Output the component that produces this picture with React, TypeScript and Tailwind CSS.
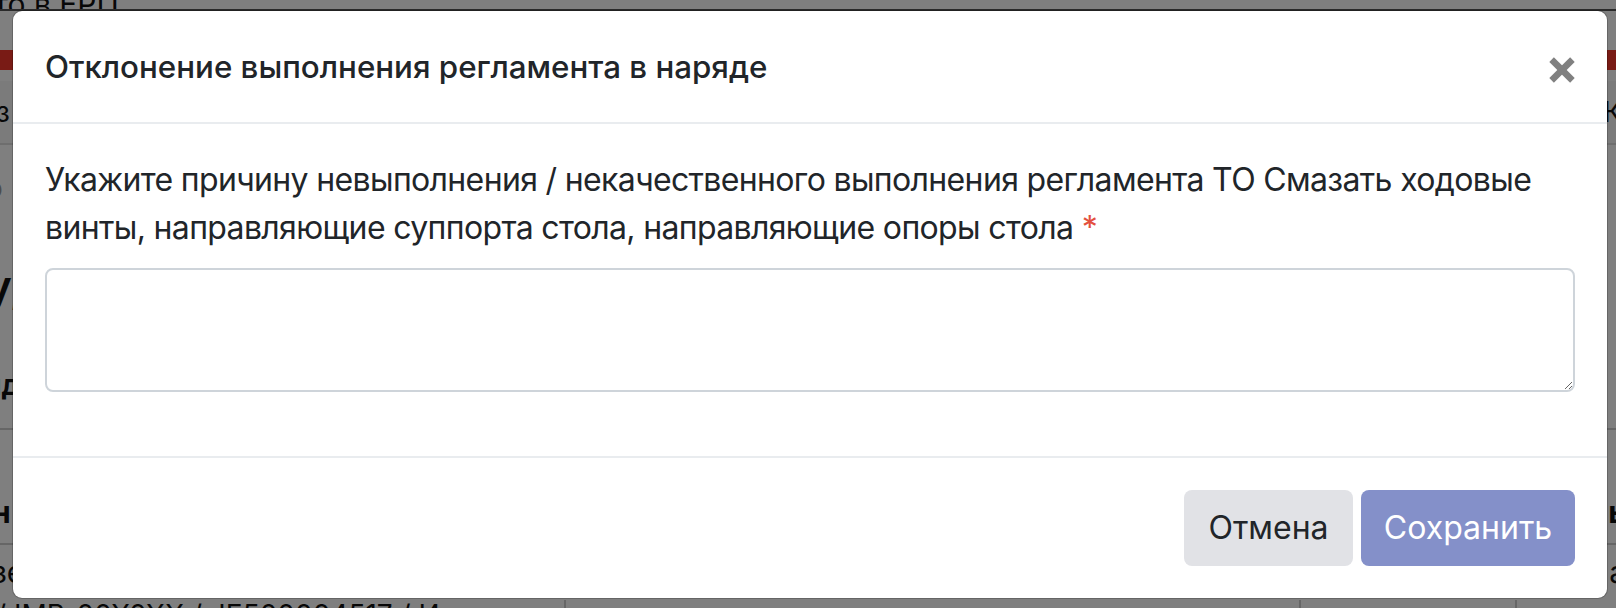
import { useState } from 'react';

function CloseIcon() {
  return (
    <svg width="26" height="26" viewBox="0 0 26 26" className="mt-[13px] shrink-0">
      <line x1="2.6" y1="2.6" x2="23.4" y2="23.4" stroke="#808080" strokeWidth="6.5" />
      <line x1="23.4" y1="2.6" x2="2.6" y2="23.4" stroke="#808080" strokeWidth="6.5" />
    </svg>
  );
}

function BackgroundPage() {
  return (
    <div className="flex flex-col w-[1616px] text-[#111]">
      <div className="h-[9px] overflow-hidden">
        <div className="-mt-[14px] -ml-[6px] text-[30px] leading-[36px]">то в ЕРП</div>
      </div>
      <div className="h-[2px] bg-[#555]" />
      <div className="h-[39px]" />
      <div className="h-[20px] bg-[#f2362b]" />
      <div className="h-[11px]" />
      <div className="h-[64px] flex items-center justify-between bg-[#f7f7f7] border-b-2 border-[#ddd] text-[28px]">
        <span className="-ml-[4px]">з</span>
        <span className="-mr-[6px]">К</span>
      </div>
      <div className="h-[283px] flex flex-col justify-around">
        <span className="-ml-[14px] text-[28px] text-[#999]">о</span>
        <span className="-ml-[14px] text-[44px] font-semibold">у,</span>
        <span className="-ml-[16px] text-[28px] font-bold">ид</span>
      </div>
      <div className="h-[2px] bg-[#ccc]" />
      <div className="h-[113px] flex items-end justify-between pb-[8px] text-[30px] font-bold">
        <span className="-ml-[8px]">н</span>
        <span className="-mr-[10px]">ь</span>
      </div>
      <div className="h-[2px] bg-[#ccc]" />
      <div className="h-[55px] flex items-center justify-between text-[30px]">
        <span className="-ml-[8px]">зе</span>
        <span className="-mr-[10px]">а</span>
      </div>
      <div className="flex text-[28px] leading-[30px]">
        <span className="w-[570px] -ml-[4px] border-r-2 border-[#ccc]">/ IMB_00X0XX / JE500004517 / И</span>
        <span className="w-[735px] border-r-2 border-[#ccc]">&nbsp;</span>
        <span className="w-[216px] border-r-2 border-[#ccc]">&nbsp;</span>
      </div>
    </div>
  );
}

export default function App() {
  const [reason, setReason] = useState('');

  return (
    <div
      className="relative w-[1616px] h-[608px] overflow-hidden bg-white"
      style={{ fontFamily: 'Inter, "Noto Sans", sans-serif' }}
    >
      <BackgroundPage />

      <div className="absolute inset-0 bg-black/50 flex justify-start pt-[10px] pl-[12px]">
        <div className="w-[1596px] h-fit bg-white border border-black/20 rounded-[10px] flex flex-col bg-clip-padding">
          <div className="flex items-start justify-between px-[32px] pt-[33px] pb-[32px] border-b-2 border-[#e9ecef]">
            <h5 className="text-[31.3px] leading-[46px] font-medium text-[#212529]">
              Отклонение выполнения регламента в наряде
            </h5>
            <CloseIcon />
          </div>

          <div className="p-[32px]">
            <div className="mb-[32px]">
              <label className="block mb-[16px] text-[32px] leading-[48px] text-[#212529] whitespace-nowrap tracking-[-0.65px]">
                Укажите причину невыполнения / некачественного выполнения регламента ТО Смазать ходовые
                <br />
                винты, направляющие суппорта стола, направляющие опоры стола{' '}
                <span className="text-[#e3503e]">*</span>
              </label>
              <textarea
                value={reason}
                onChange={(e) => setReason(e.target.value)}
                className="block w-full h-[124px] border-2 border-[#ced4da] rounded-[8px] px-[24px] py-[12px] text-[32px] outline-none"
              />
            </div>
          </div>

          <div className="flex justify-end gap-[8px] p-[32px] border-t-2 border-[#e9ecef]">
            <button className="w-[169px] h-[76px] rounded-[8px] bg-[#e1e2e6] text-[32px] leading-[48px] text-[#212529]">
              Отмена
            </button>
            <button className="w-[214px] h-[76px] rounded-[8px] bg-[#8490c9] text-[32px] leading-[48px] text-white">
              Сохранить
            </button>
          </div>
        </div>
      </div>
    </div>
  );
}
